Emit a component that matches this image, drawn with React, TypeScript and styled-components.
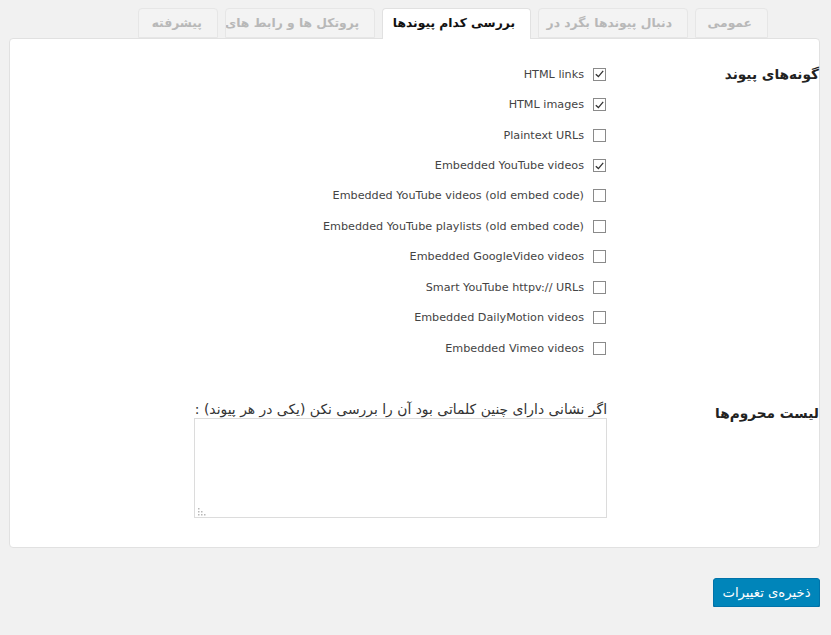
import React, { useState } from 'react';
import styled, { createGlobalStyle } from 'styled-components';

// Page
//----------------------------------------------
const GlobalStyle = createGlobalStyle`
  html, body {
    margin: 0;
    padding: 0;
    background: #f1f1f1;
  }
`;

type TabItem = { label: string; width: number };

const tabs: Array<TabItem> = [
  { label: 'عمومی', width: 73 },
  { label: 'دنبال پیوندها بگرد در', width: 150 },
  { label: 'بررسی کدام پیوندها', width: 149 },
  { label: 'پروتکل ها و رابط های برنامه‌نویسی', width: 150 },
  { label: 'پیشرفته', width: 80 },
];

type LinkType = { label: string; checked: boolean };

const linkTypes: Array<LinkType> = [
  { label: 'HTML links', checked: true },
  { label: 'HTML images', checked: true },
  { label: 'Plaintext URLs', checked: false },
  { label: 'Embedded YouTube videos', checked: true },
  { label: 'Embedded YouTube videos (old embed code)', checked: false },
  { label: 'Embedded YouTube playlists (old embed code)', checked: false },
  { label: 'Embedded GoogleVideo videos', checked: false },
  { label: 'Smart YouTube httpv:// URLs', checked: false },
  { label: 'Embedded DailyMotion videos', checked: false },
  { label: 'Embedded Vimeo videos', checked: false },
];

const CheckIcon = () => (
  <svg width="9" height="8" viewBox="0 0 9 8">
    <path d="M0.8 4.2 L3.4 6.6 L8.2 0.9" fill="none" stroke="#333" strokeWidth="1.3" />
  </svg>
);

// resize grip of the textarea, dotted like the old IE one
const GripIcon = () => (
  <svg width="8" height="8" viewBox="0 0 8 8">
    {[
      [0, 0],
      [0, 3],
      [3, 3],
      [0, 6],
      [3, 6],
      [6, 6],
    ].map(([x, y]) => (
      <rect key={`${x}-${y}`} x={x} y={y} width="1.5" height="1.5" fill="#b8b8b8" />
    ))}
  </svg>
);

const App: React.FC = () => {
  const [activeTab, setActiveTab] = useState<number>(2);
  const [checks, setChecks] = useState<Array<boolean>>(
    linkTypes.map((t) => t.checked),
  );

  const toggle = (i: number) =>
    setChecks((prev) => prev.map((v, j) => (j === i ? !v : v)));

  return (
    <DivPage>
      <GlobalStyle />
      <DivTabBar>
        {tabs.map((tab, i) => (
          <DivTab
            key={tab.label}
            $active={i === activeTab}
            $width={tab.width}
            onClick={() => setActiveTab(i)}
          >
            {tab.label}
          </DivTab>
        ))}
      </DivTabBar>
      <DivPanel>
        <DivSection>
          <DivHeading>گونه‌های پیوند</DivHeading>
          <DivField>
            {linkTypes.map((item, i) => (
              <LabelRow key={item.label} onClick={() => toggle(i)}>
                <SpanBox>{checks[i] && <CheckIcon />}</SpanBox>
                <SpanText>{item.label}</SpanText>
              </LabelRow>
            ))}
          </DivField>
        </DivSection>
        <DivSection $second>
          <DivHeading $tight>لیست محروم‌ها</DivHeading>
          <DivField>
            <DivDescription>
              اگر نشانی دارای چنین کلماتی بود آن را بررسی نکن (یکی در هر پیوند) :
            </DivDescription>
            <DivAreaWrap>
              <TextArea />
              <DivGrip>
                <GripIcon />
              </DivGrip>
            </DivAreaWrap>
          </DivField>
        </DivSection>
      </DivPanel>
      <DivFooter>
        <ButtonPrimary>ذخیره‌ی تغییرات</ButtonPrimary>
      </DivFooter>
    </DivPage>
  );
};

const DivPage = styled.div`
  direction: rtl;
  padding: 8px 11px 0 9px;
  font-family: Tahoma, 'Liberation Sans', 'DejaVu Sans', sans-serif;
  color: #333;
`;

const DivTabBar = styled.div`
  display: flex;
  gap: 7px;
  padding-right: 52px;
  height: 30px;
  position: relative;
  z-index: 1;
`;

const DivTab = styled.div<{ $active?: boolean; $width: number }>`
  box-sizing: border-box;
  width: ${(p) => p.$width}px;
  height: ${(p) => (p.$active ? 31 : 30)}px;
  padding: 0 15px;
  border: 1px solid ${(p) => (p.$active ? '#e1e1e1' : '#e6e6e6')};
  border-bottom: ${(p) => (p.$active ? 'none' : '1px solid #e6e6e6')};
  border-radius: 4px 4px 0 0;
  background: ${(p) => (p.$active ? '#fff' : '#f3f3f3')};
  color: ${(p) => (p.$active ? '#111' : '#b8b8b8')};
  font-family: 'DejaVu Sans', sans-serif;
  font-size: 12.3px;
  font-weight: 700;
  line-height: 29px;
  white-space: nowrap;
  overflow: hidden;
  cursor: pointer;
`;

const DivPanel = styled.div`
  background: #fff;
  border: 1px solid #e1e1e1;
  border-radius: 4px;
  padding: 20px 0 29px 0;
`;

const DivSection = styled.div<{ $second?: boolean }>`
  display: grid;
  grid-template-columns: 212px 1fr;
  margin-top: ${(p) => (p.$second ? 38 : 0)}px;
`;

const DivHeading = styled.div<{ $tight?: boolean }>`
  font-family: 'DejaVu Sans', sans-serif;
  font-size: 13.7px;
  font-weight: 700;
  color: #222;
  line-height: ${(p) => (p.$tight ? 24 : 30)}px;
`;

const DivField = styled.div`
  display: flex;
  flex-direction: column;
  align-items: flex-start;
`;

const LabelRow = styled.label`
  display: flex;
  align-items: center;
  gap: 9px;
  height: 30.45px;
  padding-right: 1px;
  cursor: pointer;
`;

const SpanBox = styled.span`
  box-sizing: border-box;
  width: 13px;
  height: 13px;
  border: 1px solid #8a8a8a;
  background: #fff;
  display: flex;
  align-items: center;
  justify-content: center;
  flex: none;
`;

const SpanText = styled.span`
  direction: ltr;
  font-family: 'DejaVu Sans', sans-serif;
  font-size: 11.2px;
  color: #444;
`;

const DivDescription = styled.div`
  font-family: 'DejaVu Sans', sans-serif;
  font-size: 13.9px;
  color: #333;
  line-height: 17px;
`;

const DivAreaWrap = styled.div`
  position: relative;
  display: flex;
`;

const TextArea = styled.textarea`
  box-sizing: border-box;
  width: 413px;
  height: 100px;
  border: 1px solid #dcdcdc;
  margin: 0;
  resize: none;
  outline: none;
  direction: rtl;
  background: #fff;
`;

const DivGrip = styled.div`
  position: absolute;
  left: 4px;
  bottom: 2px;
  display: flex;
  pointer-events: none;
`;

const DivFooter = styled.div`
  display: flex;
  padding-top: 30px;
`;

const ButtonPrimary = styled.button`
  box-sizing: border-box;
  width: 107px;
  height: 29px;
  border: 1px solid #0073aa;
  border-radius: 3px;
  background: #0085ba;
  box-shadow: 0 1px 0 #006799;
  color: #fff;
  font-family: 'DejaVu Sans', sans-serif;
  font-size: 13.2px;
  cursor: pointer;
`;

export default App;
